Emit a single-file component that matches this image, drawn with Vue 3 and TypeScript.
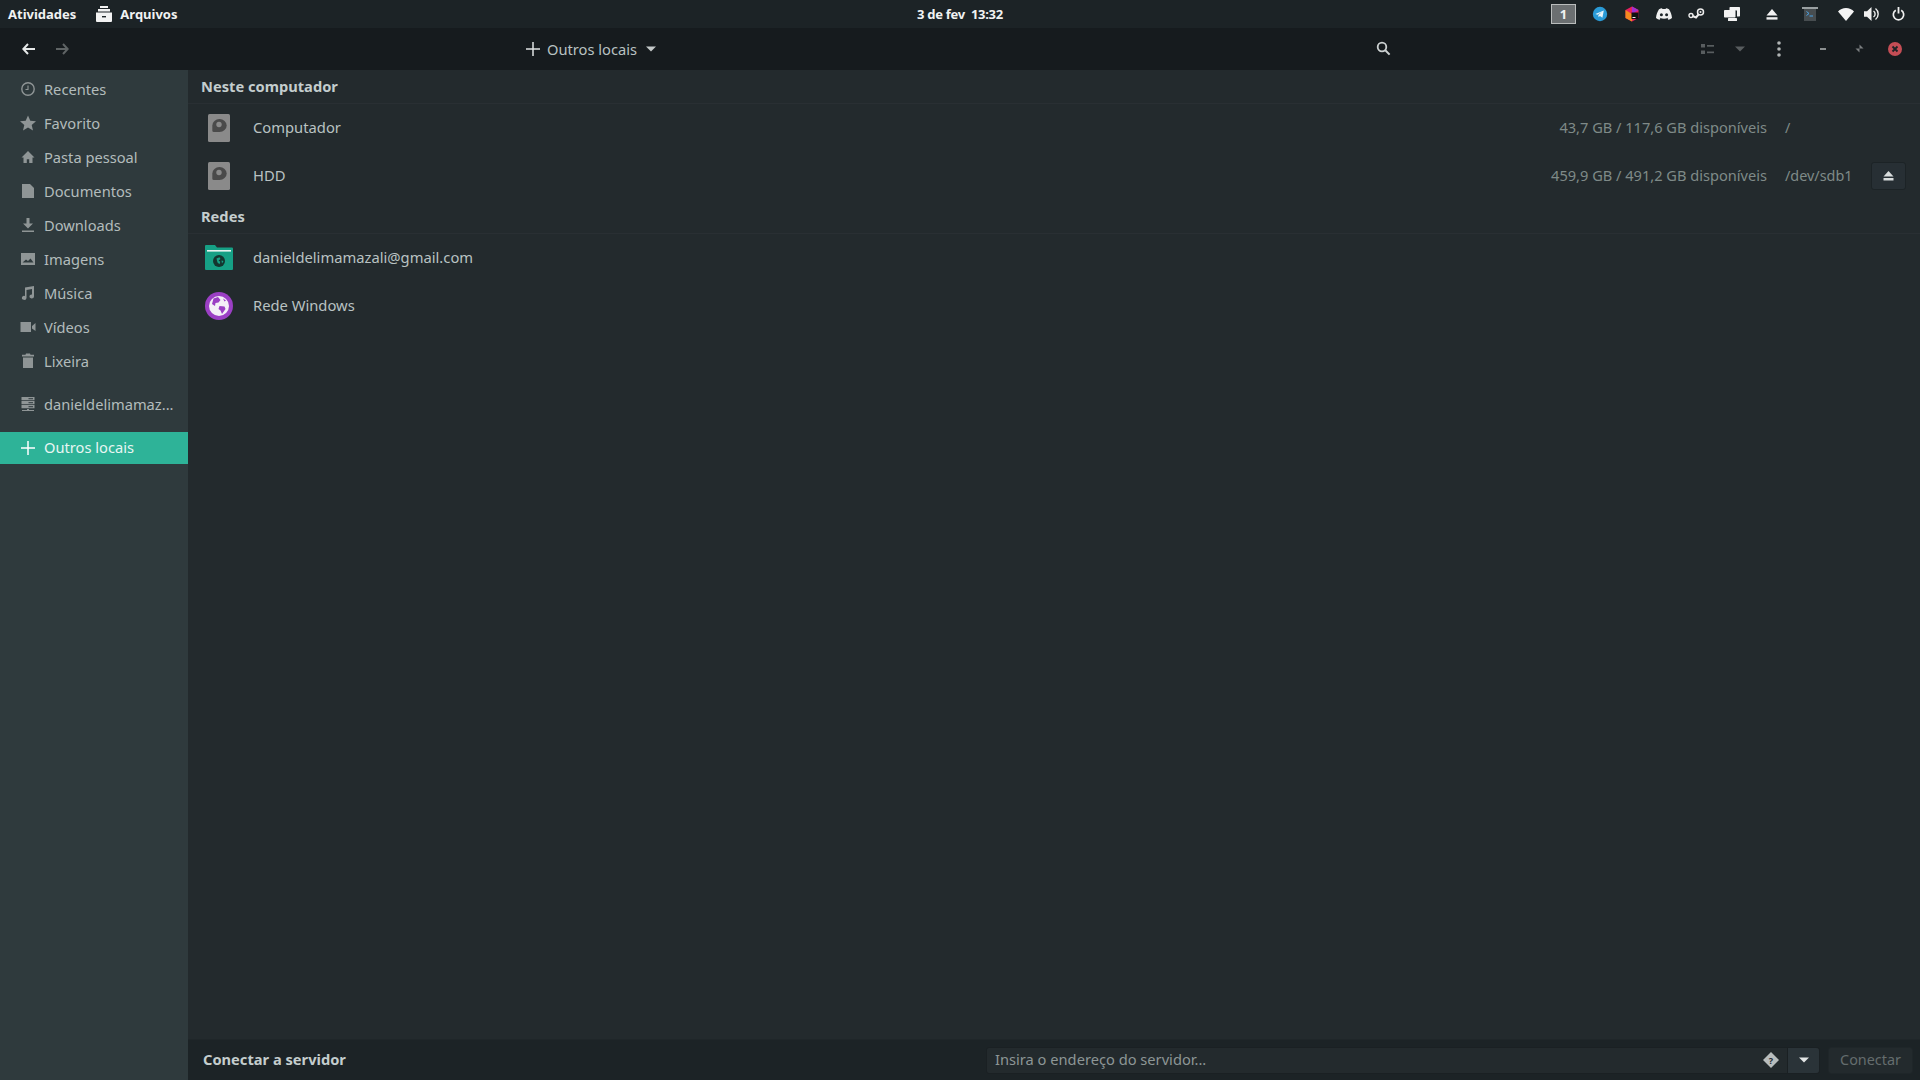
<script setup lang="ts">
const places = [
  { key: 'recent', label: 'Recentes' },
  { key: 'star', label: 'Favorito' },
  { key: 'home', label: 'Pasta pessoal' },
  { key: 'doc', label: 'Documentos' },
  { key: 'down', label: 'Downloads' },
  { key: 'img', label: 'Imagens' },
  { key: 'music', label: 'Música' },
  { key: 'video', label: 'Vídeos' },
  { key: 'trash', label: 'Lixeira' },
]
</script>

<template>
  <div class="screen">
    <div class="panel">
      <div class="panel-left">
        <span class="activities">Atividades</span>
        <svg class="app-icon" width="16" height="16" viewBox="0 0 16 16"><path d="M4 0h8v2H4zM2 3h12v2.400H2zM0 6.500h16V15a1 1 0 0 1-1 1H1a1 1 0 0 1-1-1z" fill="#f2f2f2"/><rect x="6" y="10" width="4" height="1.400" fill="#1c2326"/></svg>
        <span class="app-name">Arquivos</span>
      </div>
      <div class="clock">3 de fev&nbsp; 13:32</div>
      <div class="tray">
        <span class="cell"><span class="ws">1</span></span>
        <span class="cell"><svg width="16" height="16" viewBox="0 0 16 16"><circle cx="8" cy="8" r="7.200" fill="#2a9ad6"/><path d="M3.400 7.900l8.400-3.400-1.400 7.300-2.500-1.800-1.300 1.200-.3-2.100 3.600-3.100-4.500 2.700z" fill="#e8f4fa"/></svg></span>
        <span class="cell"><svg width="16" height="16" viewBox="0 0 16 16"><path d="M8 .5l6.500 3.600v7.800L8 15.500l-6.500-3.600V4.100z" fill="#e8205f"/><path d="M8 .5l6.500 3.600L8 8z" fill="#a030d0"/><path d="M1.500 4.100L8 8v7.500l-6.500-3.600z" fill="#f58a1f"/><rect x="7.500" y="6.500" width="7" height="6.500" fill="#111"/><rect x="8.500" y="11" width="3" height="1" fill="#eee"/></svg></span>
        <span class="cell"><svg width="16" height="14" viewBox="0 0 16 12"><path d="M3 1.200C4.200.6 5.200.3 6 .2l.4.8h3.200l.4-.8c.8.1 1.800.4 3 1C14.600 3.600 15.700 6.500 16 10c-1.300 1-2.500 1.500-3.700 1.800l-.8-1.300.9-.5-.3-.2c-2.600 1.200-5.600 1.200-8.200 0l-.3.2.9.5-.8 1.300C2.500 11.500 1.300 11 0 10 .3 6.500 1.400 3.600 3 1.200z" fill="#f0f0f0"/><circle cx="5.400" cy="6.700" r="1.500" fill="#1c2326"/><circle cx="10.600" cy="6.700" r="1.500" fill="#1c2326"/></svg></span>
        <span class="cell"><svg width="17" height="12" viewBox="0 0 17 12"><circle cx="12.500" cy="4" r="3" fill="none" stroke="#ededed" stroke-width="1.500"/><circle cx="12.500" cy="4" r="1" fill="#ededed"/><circle cx="3" cy="7.500" r="2" fill="none" stroke="#ededed" stroke-width="1.400"/><path d="M4.500 8l3.500 1.500 2.500-3" fill="none" stroke="#ededed" stroke-width="2"/></svg></span>
        <span class="cell"><svg width="16" height="14" viewBox="0 0 16 14"><path d="M5.500.7A.7.700 0 0 1 6.200 0h9.100a.7.700 0 0 1 .7.700v8a.7.700 0 0 1-.7.700H13V3.500H5.500z" fill="#f2f2f2"/><rect x="0" y="3" width="11.500" height="7.500" rx=".8" fill="#f2f2f2"/><rect x="4" y="11" width="9" height="3" rx=".6" fill="#f2f2f2"/></svg></span>
        <span class="cell"><svg width="12" height="11" viewBox="0 0 12 11"><path d="M6 0l5.500 6.500H.5z" fill="#f2f2f2"/><rect x=".5" y="8.200" width="11" height="2.400" fill="#f2f2f2"/></svg></span>
        <span class="cell"><svg width="16" height="14" viewBox="0 0 16 14"><rect x="0" y="0" width="16" height="2" fill="#9aa0a2"/><rect x="2" y="2" width="12" height="12" fill="#474d50"/><path d="M4.500 4.500l2.500 2-2.500 2" fill="none" stroke="#49a4e8" stroke-width="1"/><rect x="7.500" y="8.500" width="3.500" height="1" fill="#49a4e8"/></svg></span>
        <span class="cell"><svg width="16" height="13" viewBox="0 0 16 13"><path d="M8 13L0 3.400C2 1.400 4.800 0 8 0s6 1.400 8 3.400z" fill="#f4f4f4"/></svg></span>
        <span class="cell"><svg width="16" height="14" viewBox="0 0 16 14"><path d="M0 4.300h3L7.500 0v14L3 9.700H0z" fill="#f0f0f0"/><path d="M9.500 4a3.600 3.600 0 0 1 0 6" fill="none" stroke="#f0f0f0" stroke-width="1.400"/><path d="M11.500 1.500a7 7 0 0 1 0 11" fill="none" stroke="#f0f0f0" stroke-width="1.400"/></svg></span>
        <span class="cell"><svg width="13" height="14" viewBox="0 0 13 14"><path d="M3.800 3.200a5.200 5.200 0 1 0 5.400 0" fill="none" stroke="#f0f0f0" stroke-width="1.700"/><rect x="5.600" y="0" width="1.800" height="6.500" fill="#f0f0f0"/></svg></span>
      </div>
    </div>

    <div class="header">
      <div class="nav">
        <span class="nav-btn"><svg width="13" height="12" viewBox="0 0 13 12"><path d="M6 1L1.300 6 6 11M1.500 6H13" fill="none" stroke="#e6e9e9" stroke-width="2"/></svg></span>
        <span class="nav-btn"><svg width="13" height="12" viewBox="0 0 13 12"><path d="M7 1l4.700 5L7 11M11.500 6H0" fill="none" stroke="#5f6465" stroke-width="2"/></svg></span>
      </div>
      <div class="path">
        <svg width="14" height="14" viewBox="0 0 14 14"><path d="M6.250 0h1.500v6.250H14v1.500H7.750V14h-1.500V7.750H0v-1.500h6.250z" fill="#dfe3e3"/></svg>
        <span class="path-label">Outros locais</span>
        <svg class="path-caret" width="10" height="6" viewBox="0 0 10 6"><path d="M0 .5h10L5 5.500z" fill="#c4c9c9"/></svg>
      </div>
      <span class="search"><svg width="15" height="15" viewBox="0 0 15 15"><circle cx="6" cy="6" r="4.300" fill="none" stroke="#cdd2d2" stroke-width="1.800"/><path d="M9.300 9.300l4.300 4.300" stroke="#cdd2d2" stroke-width="2"/></svg></span>
      <span class="spacer"></span>
      <span class="hb w34"><svg width="13" height="12" viewBox="0 0 13 12"><rect x="0" y="1" width="4" height="3.500" fill="#585d5f"/><rect x="0" y="7.500" width="4" height="3.500" fill="#585d5f"/><rect x="6" y="2" width="7" height="1.700" fill="#585d5f"/><rect x="6" y="8.500" width="7" height="1.700" fill="#585d5f"/></svg></span>
      <span class="hb w32"><svg width="10" height="6" viewBox="0 0 10 6"><path d="M0 .5h10L5 5.500z" fill="#585d5f"/></svg></span>
      <span class="hb w46"><svg width="4" height="16" viewBox="0 0 4 16"><circle cx="2" cy="2" r="1.800" fill="#b0b5b5"/><circle cx="2" cy="8" r="1.800" fill="#b0b5b5"/><circle cx="2" cy="14" r="1.800" fill="#b0b5b5"/></svg></span>
      <span class="hb w42"><svg width="6" height="2" viewBox="0 0 6 2"><rect width="6" height="2" fill="#8b8f90"/></svg></span>
      <span class="hb w30"><svg width="9" height="9" viewBox="0 0 9 9"><path d="M4.500 .5L8.500 4.500H4.500zM4.500 4.500V8.500L.5 4.500z" fill="#7b7f80"/></svg></span>
      <span class="hb w42"><svg width="14" height="14" viewBox="0 0 14 14"><circle cx="7" cy="7" r="7" fill="#c44d55"/><path d="M4.500 4.500l5 5M9.500 4.500l-5 5" stroke="#1c2326" stroke-width="1.800"/></svg></span>
    </div>

    <div class="body">
      <aside class="sidebar">
        <div class="places">
          <div v-for="p in places" :key="p.key" class="place">
            <span class="place-icon">
              <svg width="16" height="16" viewBox="0 0 16 16" fill="#8f9596">
                <g v-if="p.key === 'recent'"><circle cx="8" cy="8" r="6.200" fill="none" stroke="#8f9596" stroke-width="1.400"/><path d="M8 4.500V8.500H5.500" fill="none" stroke="#8f9596" stroke-width="1.100"/></g>
                <path v-else-if="p.key === 'star'" d="M8 .5l2.300 5.200 5.700.5-4.300 3.700 1.300 5.600L8 12.600l-5 2.900 1.300-5.600L0 6.200l5.700-.5z"/>
                <path v-else-if="p.key === 'home'" d="M8 2L1.500 8.500H3.500V14H6.800V10.200H9.200V14H12.500V8.500H14.500z"/>
                <path v-else-if="p.key === 'doc'" d="M2 1h8l4 4v10H2z"/>
                <path v-else-if="p.key === 'down'" d="M6.500 1h3v5.500H13L8 11.500 3 6.500H6.500zM2 13.500h12V15H2z"/>
                <path v-else-if="p.key === 'img'" fill-rule="evenodd" d="M1 2h14v12H1zM2.500 11.500h11L10.500 7.500 8 10 6 8.500z"/>
                <path v-else-if="p.key === 'music'" d="M5 2.500L14 1V11.500a2.300 2 0 1 1-2-2V4L6.500 5V13a2.300 2 0 1 1-1.500-2z"/>
                <path v-else-if="p.key === 'video'" d="M0.500 3h10.500v10H0.500zM12 7l3.500-3v8L12 9.500z"/>
                <path v-else d="M6 .5h4l.5 1.200H14v1.800H2V1.700h3.500zM3 4.500h10V15H3z"/>
              </svg>
            </span>
            <span class="place-label">{{ p.label }}</span>
          </div>
          <div class="place mount">
            <span class="place-icon">
              <svg width="16" height="16" viewBox="0 0 16 16" fill="#8f9596"><path d="M1.500 1h13v3.300h-13zM1.500 5h13v3.300h-13zM1.500 9h13v3.300h-13zM7 13h2v1h5v1H2v-1h5z"/><rect x="8.500" y="2.200" width="4.500" height="1" fill="#2f3a3d"/><rect x="8.500" y="6.200" width="4.500" height="1" fill="#2f3a3d"/><rect x="8.500" y="10.200" width="4.500" height="1" fill="#2f3a3d"/></svg>
            </span>
            <span class="place-label">danieldelimamaz...</span>
          </div>
          <div class="place active">
            <span class="place-icon"><svg width="14" height="14" viewBox="0 0 14 14"><path d="M6.250 0h1.500v6.250H14v1.500H7.750V14h-1.500V7.750H0v-1.500h6.250z" fill="#fff"/></svg></span>
            <span class="place-label">Outros locais</span>
          </div>
        </div>
      </aside>

      <main class="main">
        <div class="content">
          <div class="section">Neste computador</div>
          <div class="row">
            <span class="row-icon"><svg width="22" height="28" viewBox="0 0 22 28"><rect width="22" height="28" rx="1.500" fill="#8a8a8a"/><path d="M4.300 16.500V11.500a7.200 6.500 0 1 1 7.200 6.500H5.800a1.500 1.500 0 0 1-1.500-1.500z" fill="#4a4a4a"/><circle cx="11" cy="10.500" r="2.700" fill="#8a8a8a"/></svg></span>
            <span class="row-name">Computador</span>
            <span class="row-size">43,7 GB / 117,6 GB disponíveis</span>
            <span class="row-path">/</span>
            <span class="row-eject"></span>
          </div>
          <div class="row">
            <span class="row-icon"><svg width="22" height="28" viewBox="0 0 22 28"><rect width="22" height="28" rx="1.500" fill="#8a8a8a"/><path d="M4.300 16.500V11.500a7.200 6.500 0 1 1 7.200 6.500H5.800a1.500 1.500 0 0 1-1.500-1.500z" fill="#4a4a4a"/><circle cx="11" cy="10.500" r="2.700" fill="#8a8a8a"/></svg></span>
            <span class="row-name">HDD</span>
            <span class="row-size">459,9 GB / 491,2 GB disponíveis</span>
            <span class="row-path">/dev/sdb1</span>
            <span class="row-eject"><span class="eject-btn"><svg width="11" height="10" viewBox="0 0 11 10"><path d="M5.500 0l5 5.500H.5z" fill="#d8dcdc"/><rect x=".5" y="7" width="10" height="2.500" fill="#d8dcdc"/></svg></span></span>
          </div>
          <div class="section">Redes</div>
          <div class="row">
            <span class="row-icon net"><svg width="28" height="25" viewBox="0 0 28 25"><path d="M0 1a1 1 0 0 1 1-1h9l2 2.500h15a1 1 0 0 1 1 1V24a1 1 0 0 1-1 1H1a1 1 0 0 1-1-1z" fill="#16a085"/><rect x="2" y="5" width="24" height="1.600" fill="#e6f3f0"/><circle cx="14" cy="16" r="6" fill="#14352f"/><path d="M11.500 13.500l3-1.300 1 1.800-2 1.500 1.800 1.200-.8 2.500-2-1.800zM16.500 15.500l2 .5-1.500 2.500z" fill="#16a085"/></svg></span>
            <span class="row-name">danieldelimamazali@gmail.com</span>
            <span class="row-size"></span><span class="row-path"></span><span class="row-eject"></span>
          </div>
          <div class="row">
            <span class="row-icon"><svg width="28" height="28" viewBox="0 0 28 28"><circle cx="14" cy="14" r="14" fill="#9b3fc4"/><circle cx="14" cy="14" r="10" fill="#f4eff7"/><path d="M8.500 6.500l4.500-1.500 2.500 3-2 2.500-3 .5-.5 3-3-2zM14.500 14l5 .5 1 2.500-3.500 5-1.500-3.500-2-1.500zM18 6.500l3 2-1.500 1z" fill="#9b3fc4"/></svg></span>
            <span class="row-name">Rede Windows</span>
            <span class="row-size"></span><span class="row-path"></span><span class="row-eject"></span>
          </div>
        </div>
        <div class="connect">
          <span class="connect-title">Conectar a servidor</span>
          <div class="address">
            <span class="placeholder">Insira o endereço do servidor...</span>
            <svg class="help" width="16" height="16" viewBox="0 0 16 16"><path d="M8 0l8 8-8 8-8-8z" fill="#b8bdbd"/><text x="8" y="11.500" text-anchor="middle" class="help-q">?</text></svg>
            <span class="address-drop"><svg width="10" height="6" viewBox="0 0 10 6"><path d="M0 .5h10L5 5.500z" fill="#e2e5e5"/></svg></span>
          </div>
          <span class="connect-btn">Conectar</span>
        </div>
      </main>
    </div>
  </div>
</template>

<style>
html, body { margin: 0; background: #232a2d; }
</style>

<style scoped>
.screen { width: 1920px; height: 1080px; display: flex; flex-direction: column; overflow: hidden; font-family: "Noto Sans", sans-serif; font-size: 14.67px; color: #b9c2c2; background: #232a2d; }
.panel { height: 28px; flex: none; display: grid; grid-template-columns: 1fr auto 1fr; align-items: center; background: #1c2326; color: #f0f2f2; font-size: 13px; font-weight: 700; }
.panel-left { display: flex; align-items: center; padding-left: 8px; }
.app-icon { margin-left: 20px; }
.app-name { margin-left: 8px; }
.clock { letter-spacing: -0.3px; }
.tray { display: grid; grid-template-columns: 32px 40px 24px 40px 24px 48px 32px 44px 28px 24px 28px; justify-content: end; padding-right: 8px; height: 28px; align-items: center; }
.cell { display: flex; justify-content: center; align-items: center; }
.ws { width: 23px; height: 18px; margin-right: 1px; border: 1px solid #b9bcbc; background: #6b6f71; display: flex; justify-content: center; align-items: center; color: #f0f2f2; font-size: 13px; }
.header { height: 42px; flex: none; display: flex; align-items: center; background: #161b1e; padding-bottom: 1px; box-sizing: border-box; }
.nav { width: 520px; flex: none; padding-left: 11px; box-sizing: border-box; display: flex; }
.nav-btn { width: 34px; display: flex; justify-content: center; }
.path { width: 848px; flex: none; display: flex; align-items: center; padding-left: 6px; box-sizing: border-box; color: #b9c2c2; }
.path-label { margin-left: 7px; }
.path-caret { margin-left: 9px; }
.search { width: 30px; display: flex; justify-content: center; }
.spacer { width: 292px; flex: none; }
.hb { display: flex; justify-content: center; align-items: center; }
.w34 { width: 34px; } .w32 { width: 32px; } .w46 { width: 46px; } .w42 { width: 42px; } .w30 { width: 30px; }
.body { flex: 1; display: flex; min-height: 0; }
.sidebar { width: 188px; flex: none; background: #2f3a3d; }
.places { padding-top: 2px; }
.place { height: 34px; display: flex; align-items: center; box-sizing: border-box; }
.place-icon { width: 44px; flex: none; display: flex; justify-content: center; padding-left: 12px; box-sizing: border-box; }
.place-label { color: #b3bcbc; white-space: nowrap; }
.mount { margin-top: 9px; }
.active { margin-top: 11px; height: 32px; background: #2eb398; }
.active .place-label { color: #e8f6f3; padding-bottom: 2px; }
.main { flex: 1; display: flex; flex-direction: column; min-width: 0; }
.content { flex: 1; }
.section { height: 34px; display: flex; align-items: center; padding-left: 13px; padding-bottom: 2px; font-weight: 700; color: #c4cdcd; border-bottom: 1px solid #292f33; box-sizing: border-box; }
.row { height: 48px; display: flex; align-items: center; padding-right: 14px; }
.row-icon { width: 32px; margin-left: 15px; flex: none; display: flex; justify-content: center; }
.net { padding-bottom: 1px; }
.row-name { margin-left: 18px; flex: 1; color: #b9c2c2; font-size: 14.75px; padding-bottom: 2px; }
.row-size { color: #7f8a88; font-size: 14.6px; padding-bottom: 2px; }
.row-path { width: 86px; margin-left: 18px; flex: none; color: #7f8a88; font-size: 14.4px; padding-bottom: 2px; }
.row-eject { width: 35px; flex: none; }
.eject-btn { width: 35px; height: 28px; box-sizing: border-box; display: flex; align-items: center; justify-content: center; background: #272f34; border: 1px solid #1c2326; border-radius: 3px; }
.connect { height: 41px; flex: none; display: flex; align-items: center; background: #1c2326; border-top: 1px solid #1f2629; box-sizing: border-box; padding-left: 15px; }
.connect-title { font-weight: 700; color: #c4cdcd; width: 783px; flex: none; padding-bottom: 2px; }
.address { width: 834px; height: 27px; flex: none; display: flex; align-items: center; box-sizing: border-box; background: #232a2d; border: 1px solid #1a2023; border-radius: 3px; }
.placeholder { flex: 1; padding-left: 8px; padding-bottom: 2px; color: #8d9696; }
.help { margin-right: 8px; }
.help-q { font-size: 9px; font-weight: 700; fill: #232a2d; font-family: "Noto Sans", sans-serif; }
.address-drop { width: 32px; height: 25px; flex: none; box-sizing: border-box; display: flex; align-items: center; justify-content: center; background: #2a3338; border-left: 1px solid #1a2023; border-radius: 0 3px 3px 0; }
.connect-btn { margin-left: 8px; width: 85px; height: 27px; box-sizing: border-box; display: flex; align-items: center; justify-content: center; padding-bottom: 2px; background: #232a2d; border: 1px solid #1f2629; border-radius: 3px; color: #656d6d; font-size: 14.4px; }
</style>
